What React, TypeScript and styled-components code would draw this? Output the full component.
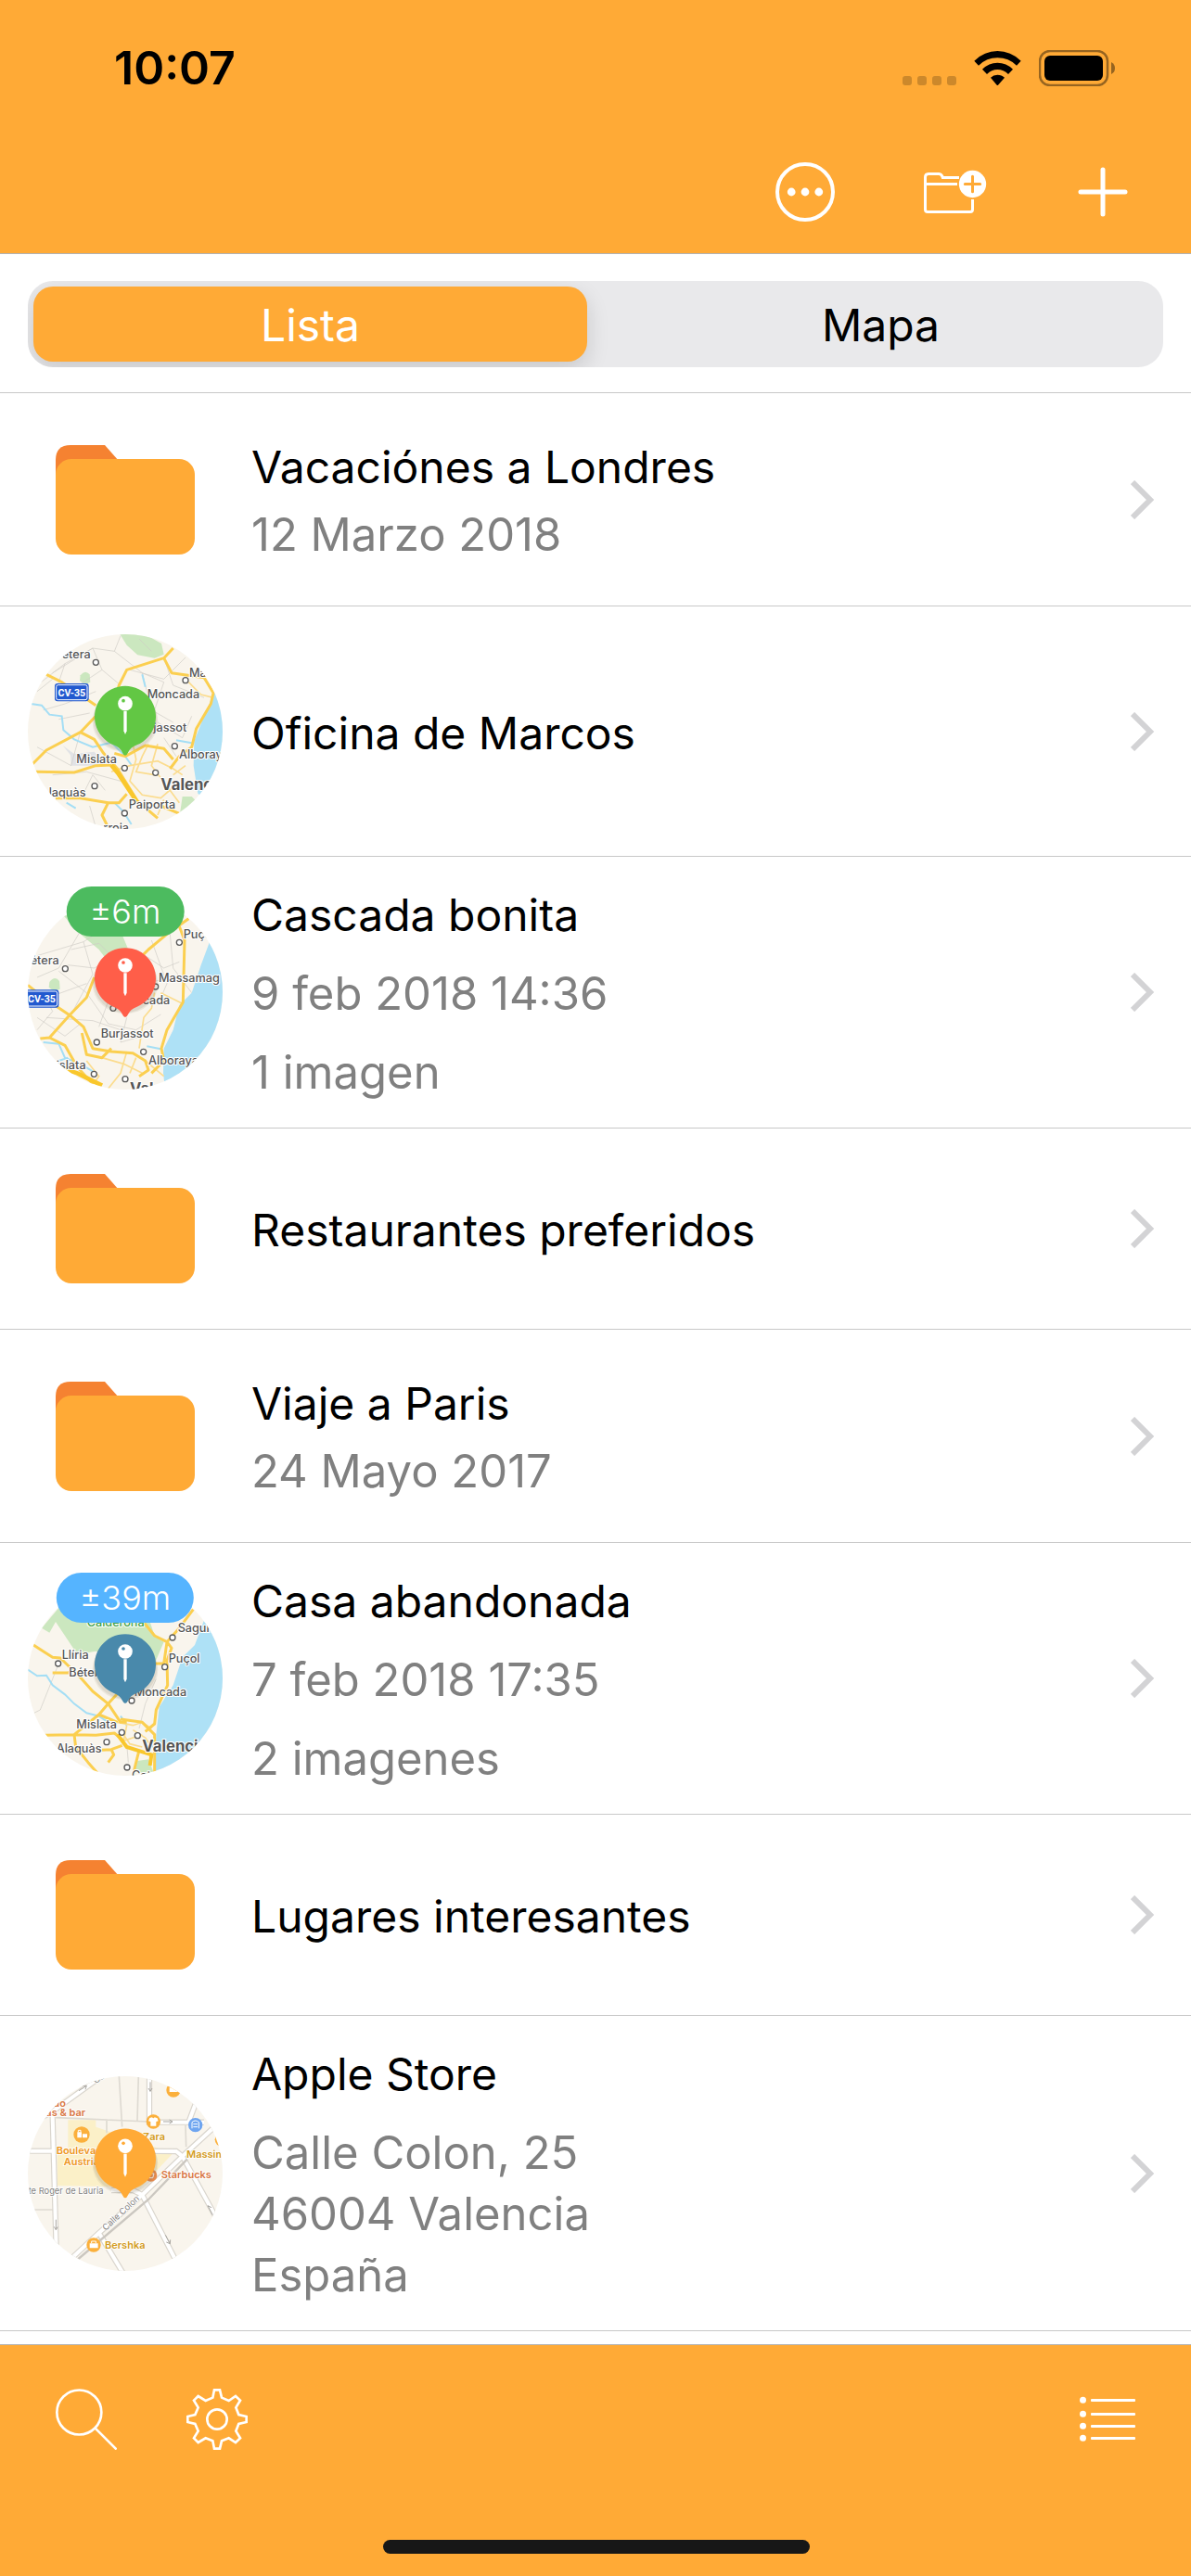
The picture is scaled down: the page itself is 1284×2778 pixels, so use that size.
import React, { useState } from "react";
import styled, { createGlobalStyle } from "styled-components";

const color = {
  accent: "#ffaa36",
  folderTab: "#f58231",
  line: "#c8c8c8",
  barLine: "#b2b2b2",
  muted: "#808080",
  track: "#e9e9eb",
  chevron: "#d3d3d5",
};

const GlobalStyle = createGlobalStyle`
  * { box-sizing: border-box; }
  body {
    margin: 0;
    background: #fff;
    color: #000;
    font-family: Inter, "Liberation Sans", sans-serif;
    font-size: 49px;
    line-height: 66px;
  }
  svg { display: block; flex: none; }
`;

const Screen = styled.div`
  display: flex;
  flex-direction: column;
  min-height: 100vh;
`;

const Header = styled.header`
  background: ${color.accent};
  border-bottom: 1px solid ${color.barLine};
`;

const StatusBar = styled.div`
  display: flex;
  justify-content: space-between;
  align-items: center;
  height: 146px;
  padding: 0 82px 0 123px;
`;

const Clock = styled.time`
  font-size: 50px;
  font-weight: 600;
`;

const StatusIcons = styled.div`
  display: flex;
  align-items: center;
  gap: 19px;
`;

const Toolbar = styled.nav`
  display: flex;
  justify-content: flex-end;
  align-items: center;
  gap: 96px;
  height: 127px;
  padding: 0 64px 5px;
`;

const IconButton = styled.button`
  display: block;
  padding: 0;
  border: 0;
  background: none;
  color: #fff;
  cursor: pointer;
`;

const SegmentStrip = styled.div`
  padding: 29px 30px 27px;
  border-bottom: 1px solid ${color.line};
`;

const SegmentTrack = styled.div`
  display: grid;
  grid-template-columns: 1fr 1fr;
  gap: 18px;
  padding: 6px;
  border-radius: 27px;
  background: ${color.track};
  overflow: hidden;
`;

const Segment = styled.button<{ $active: boolean }>`
  height: 81px;
  padding: 2px 0 0;
  border: 0;
  border-radius: 21px;
  background: ${(p) => (p.$active ? color.accent : "transparent")};
  box-shadow: ${(p) => (p.$active ? "0 9px 24px rgba(0, 0, 0, 0.14)" : "none")};
  color: ${(p) => (p.$active ? "#fff" : "#000")};
  font: inherit;
  font-size: 48px;
  cursor: pointer;
`;

const List = styled.ul`
  flex: 1;
  margin: 0;
  padding: 0;
  list-style: none;
`;

const Item = styled.li`
  border-bottom: 1px solid ${color.line};
`;

const Row = styled.a<{ $kind: "folder" | "place" }>`
  display: flex;
  align-items: center;
  gap: 31px;
  min-height: ${(p) => (p.$kind === "folder" ? "216px" : "269px")};
  padding: ${(p) => (p.$kind === "folder" ? "45px" : "28px")} 39px
    ${(p) => (p.$kind === "folder" ? "45px" : "28px")} 30px;
  color: inherit;
  text-decoration: none;
`;

const Leading = styled.div`
  position: relative;
  display: flex;
  justify-content: center;
  width: 210px;
  flex: none;
`;

const Body = styled.div<{ $kind: "folder" | "place" }>`
  display: flex;
  flex: 1;
  flex-direction: column;
  gap: ${(p) => (p.$kind === "folder" ? "7px" : "19px")};
  min-width: 0;
  margin: 2px 0 -2px;
`;

const Title = styled.div`
  font-size: 48px;
`;

const Detail = styled.div`
  color: ${color.muted};
  white-space: pre-line;
`;

const MapCircle = styled.svg`
  width: 210px;
  height: 210px;
  border-radius: 50%;
  background: #f9f5ed;
`;

const Accuracy = styled.span<{ $tone: string }>`
  position: absolute;
  top: -9px;
  left: 50%;
  transform: translateX(-50%);
  padding: 0 25px;
  border-radius: 27px;
  background: ${(p) => p.$tone};
  color: #fff;
  font-size: 36px;
  font-weight: 300;
  line-height: 54px;
  white-space: nowrap;
`;

const Footer = styled.footer`
  position: sticky;
  bottom: 0;
  padding: 47px 59px 24px 60px;
  border-top: 1px solid ${color.barLine};
  background: ${color.accent};
`;

const FooterTools = styled.div`
  display: flex;
  align-items: center;
  gap: 75px;
  margin-bottom: 97px;
`;

const Spacer = styled.div`
  flex: 1;
`;

const HomeIndicator = styled.div`
  width: 460px;
  max-width: 40%;
  height: 15px;
  margin: 0 auto;
  border-radius: 8px;
  background: #171717;
`;

/* ---------- icons ---------- */

const SignalDots = () => (
  <svg width="58" height="39" viewBox="0 0 58 39" fill="#cc882b" aria-hidden="true">
    {[0, 16, 32, 48].map((x) => (
      <rect key={x} x={x} y="28" width="10" height="10" rx="3" />
    ))}
  </svg>
);

const Wifi = () => (
  <svg width="51" height="39" viewBox="810 69 153 117" fill="#000" aria-hidden="true">
    <path d="M811 104 Q844 72 886 72 Q929 72 962 104 L948 119 Q922 94 886 94 Q851 94 825 119Z" />
    <path d="M837 131 Q858 110 886 110 Q915 110 936 131 L921 147 Q906 132 886 132 Q867 132 852 147Z" />
    <path d="M864 158 Q873 149 886 149 Q900 149 909 158 L888 182 Q886 184 884 182Z" />
  </svg>
);

const Battery = () => (
  <svg width="82" height="39" viewBox="0 0 82 39" aria-hidden="true">
    <rect x="1" y="1" width="73" height="37" rx="11" fill="none" stroke="#966420" strokeWidth="2.5" />
    <rect x="6" y="6" width="63" height="27" rx="6" fill="#000" />
    <path d="M78 13 Q82 15 82 19.500 Q82 24 78 26Z" fill="#966420" />
  </svg>
);

const MoreIcon = () => (
  <svg width="64" height="64" viewBox="0 0 64 64" fill="currentColor" aria-hidden="true">
    <circle cx="32" cy="32" r="30" fill="none" stroke="currentColor" strokeWidth="4" />
    <circle cx="17.200" cy="32" r="4.400" />
    <circle cx="32" cy="32" r="4.400" />
    <circle cx="46.800" cy="32" r="4.400" />
  </svg>
);

const NewFolderIcon = () => (
  <svg width="68" height="64" viewBox="648 435 204 192" fill="none" stroke="currentColor" strokeWidth="9" aria-hidden="true">
    <path d="M762 484.500 H709 Q706 473 697 472.500 H663 Q652.500 473 652.500 483 V588 Q652.500 595.500 660 595.500 H798 Q805.500 595.500 805.500 588 V555" />
    <path d="M652 505.500 H756" />
    <circle cx="805.500" cy="505.500" r="44" fill="currentColor" stroke="none" />
    <path d="M805.500 481 V530 M781 505.500 H830" stroke={color.accent} strokeLinecap="round" />
  </svg>
);

const PlusIcon = () => (
  <svg width="60" height="60" viewBox="0 0 60 60" fill="none" stroke="currentColor" strokeWidth="5" strokeLinecap="round" aria-hidden="true">
    <path d="M29 6 V54 M5 30 H53" />
  </svg>
);

const SearchIcon = () => (
  <svg width="66" height="66" viewBox="30 33 198 198" fill="none" stroke="currentColor" strokeWidth="8" aria-hidden="true">
    <circle cx="106" cy="109.500" r="72" />
    <path d="M158 161 L224 227" strokeLinecap="round" />
  </svg>
);

const GearIcon = () => (
  <svg width="66" height="66" viewBox="453 33 198 198" fill="none" stroke="currentColor" strokeWidth="8" aria-hidden="true">
    <path d="M538 62 L543 37 H561 L567 62 L590 72 L612 57 L627 71 L613 94 L622 117 L647 123 V141 L622 147 L613 170 L627 193 L612 207 L590 193 L567 202 L561 227 H543 L538 202 L515 193 L491 207 L477 193 L491 170 L481 147 L457 141 V123 L481 117 L491 94 L477 71 L491 57 L515 72Z" />
    <circle cx="552" cy="132" r="32" />
  </svg>
);

const ListIcon = () => (
  <svg width="61" height="50" viewBox="60 57 183 150" fill="currentColor" aria-hidden="true">
    {[70, 115, 154, 193].map((y) => (
      <g key={y}>
        <circle cx="70.500" cy={y} r="10.500" />
        <rect x="96" y={y - 4} width="144" height="9" rx="3" />
      </g>
    ))}
  </svg>
);

const FolderIcon = () => (
  <svg width="150" height="118" viewBox="0 0 150 118" aria-hidden="true">
    <path d="M0 34 V16 Q0 0 16 0 H53 L68 17 V34Z" fill={color.folderTab} />
    <rect y="15" width="150" height="103" rx="17" fill={color.accent} />
  </svg>
);

const Chevron = () => (
  <svg width="26" height="42" viewBox="0 0 26 42" fill="none" stroke={color.chevron} strokeWidth="6" aria-hidden="true">
    <path d="M2 2 L21 21 L2 40" />
  </svg>
);

/* ---------- map thumbnails ---------- */

const Roads = styled.g`
  fill: none;
  stroke: #fbcf50;
  stroke-width: 9;
  stroke-linejoin: round;
`;

const MinorRoads = styled.g`
  fill: none;
  stroke: #fbdc8e;
  stroke-width: 5;
`;

const Tracks = styled.g`
  fill: none;
  stroke: #cfccc6;
  stroke-width: 2;
`;

const Rivers = styled.g`
  fill: none;
  stroke: #a4def5;
  stroke-width: 6;
`;

const Water = styled.path`
  fill: #aee1f6;
`;

const Park = styled.path`
  fill: #cbe7bf;
`;

const Town = styled.text<{ $big?: boolean; $tone?: string }>`
  fill: ${(p) => p.$tone || "#555"};
  font-size: ${(p) => (p.$big ? 50 : 38)}px;
  font-weight: ${(p) => (p.$big ? 700 : 500)};
  stroke: #fff;
  stroke-width: 6px;
  stroke-linejoin: round;
  paint-order: stroke;
`;

const Dots = ({ at }: { at: [number, number][] }) => (
  <g fill="#fff" stroke="#5a5a5a" strokeWidth="4">
    {at.map(([x, y]) => (
      <circle key={`${x}-${y}`} cx={x} cy={y} r="9" />
    ))}
  </g>
);

const RoadSign = ({ x, y }: { x: number; y: number }) => (
  <g transform={`translate(${x} ${y})`}>
    <rect width="110" height="58" rx="9" fill="#2259cf" />
    <rect x="5" y="5" width="100" height="48" rx="6" fill="none" stroke="#fff" strokeWidth="3" />
    <text x="55" y="41" textAnchor="middle" fill="#fff" fontSize="32" fontWeight="700" fontFamily="Roboto, sans-serif">
      CV-35
    </text>
  </g>
);

const Pin = ({ y, tone }: { y: number; tone: string }) => (
  <g transform={`translate(345 ${y})`}>
    <ellipse cx="0" cy="-30" rx="106" ry="98" fill="#7a6a50" opacity="0.1" />
    <ellipse cx="0" cy="-36" rx="103" ry="100" fill="#7a6a50" opacity="0.12" />
    <path d="M0 79 Q-5 79 -9 70 Q-17 52 -38 45 A99 99 0 1 1 38 45 Q17 52 9 70 Q5 79 0 79Z" fill={tone} />
    <path d="M-5 -64 H5 V0 L0 11 L-5 0Z" fill="#fff" />
    <circle cx="0" cy="-89" r="23.500" fill="#fff" />
    <circle cx="-6" cy="-98" r="5.500" fill={tone} />
  </g>
);

const OfficeMap = () => (
  <MapCircle viewBox="30 45 630 630" role="img" aria-label="Mapa de Valencia">
    <Park d="M325 40 L350 80 L385 112 L440 122 L470 110 L462 75 L400 40Z" />
    <Park d="M200 178 Q215 158 230 175 L232 200 L215 208 L198 196Z" />
    <Park d="M520 640 L530 570 L560 570 L590 600Z" />
    <path d="M143 405 L180 432 L245 425 L285 470 L170 470 L168 436Z" fill="#e2e3e6" />
    <Water d="M632 235 L600 310 L568 390 L566 470 L580 560 L620 590 L670 560 V240Z" />
    <Tracks>
      <path d="M110 170 L240 90 L310 100 L330 50 M240 90 L150 140 L120 230 M310 100 L400 170 L430 290 L500 330 M240 90 L270 160 L330 210 M80 290 L150 270 L250 230 M130 320 L230 300 M360 160 L470 190 L540 120 M470 120 L500 210 L600 250 M400 170 L470 200 L440 290 M110 500 L220 490 L330 520 M60 410 L170 470 L200 360 M210 560 L240 500 L280 550 M450 330 L530 380 L560 310" />
      <path d="M60 230 L110 190 M150 140 L60 210 M270 160 L180 220 M430 100 L390 60 M230 600 L250 670 M470 380 L510 440" />
    </Tracks>
    <Rivers>
      <path d="M40 270 L75 275 L100 305 L140 310 L145 355 L180 385 L240 410 L300 395 L345 440 L365 468" />
      <path d="M400 175 L410 215 M510 388 L560 397 M155 590 L185 608 M310 590 L340 620 L365 660" />
    </Rivers>
    <MinorRoads>
      <path d="M300 490 L360 470 L450 455 L500 480 L530 500 M370 400 L380 450 L360 520 L400 565 L460 575 L500 540 M450 400 L430 470 L520 590 M420 400 L400 440 L380 490 L440 500 M550 200 L590 240 L630 250 M470 580 L450 630 M540 470 L500 500" />
    </MinorRoads>
    <Roads>
      <path d="M500 90 L470 122 L350 160 L325 210 L310 260 M470 122 L495 170 L600 185 L630 235 L622 270 L575 350 L560 410 L520 440 L490 480" />
      <path d="M90 175 L140 200 L250 275 M250 310 L200 362 L90 420 L45 465 M200 362 L245 385 L275 430 L320 480 L385 585 L450 640" />
      <path d="M55 490 L180 492 L250 470 L300 468 M310 430 L345 440 L410 405 L470 415 L500 450 M120 575 L200 575 L290 590 L325 590 L350 562 M290 590 L270 630 L290 670 M460 600 L520 625" />
    </Roads>
    <path d="M300 468 L322 495 L385 590" fill="none" stroke="#f9c72c" strokeWidth="14" />
    <Dots at={[[250, 136], [540, 194], [505, 407], [343, 478], [443, 493], [246, 536], [343, 624]]} />
    <Town x="140" y="122">etera</Town>
    <Town x="552" y="182">Ma</Town>
    <Town x="416" y="251">Moncada</Town>
    <Town x="436" y="360">jassot</Town>
    <Town x="519" y="447">Alboray</Town>
    <Town x="187" y="463">Mislata</Town>
    <Town x="98" y="570">laquàs</Town>
    <Town x="356" y="608">Paiporta</Town>
    <Town x="274" y="684">rroja</Town>
    <Town x="460" y="548" $big>Valencia</Town>
    <RoadSign x={117} y={204} />
    <Pin y={358} tone="#62c744" />
  </MapCircle>
);

const WaterfallMap = () => (
  <MapCircle viewBox="30 63 630 630" role="img" aria-label="Mapa de Moncada">
    <Park d="M145 130 L200 190 L260 240 L290 280 L355 240 L330 180 L300 130Z" />
    <Park d="M100 345 Q118 322 132 342 L134 368 L115 375 L98 362Z" />
    <Water d="M618 215 L590 290 L560 380 L520 420 L500 500 L470 560 L468 640 L475 700 H680 V215Z" />
    <Tracks>
      <path d="M60 260 L210 215 L310 150 M160 290 L245 300 L350 240 L400 260 M130 310 L220 380 L290 480 M210 215 L240 320 L170 450 M90 460 L240 470 L330 500 M60 500 L110 440 L80 380 M350 460 L330 540 L400 520 M380 240 L470 300 L520 280 M430 210 L480 350 L450 420 M490 190 L500 300 L560 380 M290 480 L380 500 L460 450 M200 180 L130 300 L60 330 M170 240 L260 220 L340 300" />
      <path d="M110 390 L220 350 M60 460 L150 520 L200 480 M390 350 L520 330 M300 380 L260 490" />
    </Tracks>
    <Rivers>
      <path d="M80 540 L130 545 L150 590 L200 610 L250 640 M415 553 L460 562 M130 600 L160 590" />
    </Rivers>
    <MinorRoads>
      <path d="M440 380 L430 430 L405 460 L390 560 M460 380 L530 415 M270 590 L340 610 L400 640 M350 570 L330 640 L290 690 M380 590 L360 640 M410 600 L470 650 M220 600 L260 650 L230 690" />
    </MinorRoads>
    <Roads>
      <path d="M550 140 L480 190 L420 240 L400 260 M520 165 L537 210 L532 410 L480 500 L462 560 L470 600 L430 640" />
      <path d="M30 355 L80 395 L165 452 L210 490 L240 560 L300 570 L370 575 L410 600 L420 630 L390 650 M245 330 L220 395 L165 452 L100 525 L70 528 M100 525 L150 550 L190 620 L240 675 M205 510 L220 580 L270 590 L300 560" />
    </Roads>
    <path d="M130 620 L190 640 L270 680" fill="none" stroke="#f9c72c" strokeWidth="14" />
    <Dots at={[[151, 302], [520, 217], [443, 360], [306, 430], [253, 540], [404, 571], [244, 643], [345, 659]]} />
    <Town x="38" y="288">étera</Town>
    <Town x="533" y="203">Puçol</Town>
    <Town x="453" y="345">Massamag</Town>
    <Town x="401" y="416">cada</Town>
    <Town x="266" y="524">Burjassot</Town>
    <Town x="420" y="612">Alboraya</Town>
    <Town x="122" y="627">islata</Town>
    <Town x="360" y="709" $big>Valencia</Town>
    <RoadSign x={20} y={370} />
    <Pin y={380} tone="#ff5e49" />
  </MapCircle>
);

const HouseMap = () => (
  <MapCircle viewBox="30 63 630 630" role="img" aria-label="Mapa de la costa de Valencia">
    <Park d="M75 215 L130 150 H410 L440 240 L470 260 L440 330 L350 330 L250 290 L190 300 L150 240 L120 195 L100 230Z" />
    <Park d="M370 680 L385 645 L420 640 L440 690Z" />
    <Water d="M600 190 L570 270 L530 310 L500 400 L455 470 L445 560 L440 690 H680 V190Z" />
    <Tracks>
      <path d="M130 330 L70 480 L50 490 M445 380 L410 460 L390 540 M350 590 L355 650" />
    </Tracks>
    <Rivers>
      <path d="M30 350 L60 370 L90 368 L110 400 L150 430 L180 460 L220 490 L260 500 L290 520" />
      <path d="M330 500 L350 530 M430 590 L450 625" />
    </Rivers>
    <MinorRoads>
      <path d="M320 520 L370 530 L400 520 L430 540 M340 560 L360 590 L400 600 M370 545 L410 570 L430 600 M350 530 L340 580 L400 560" />
    </MinorRoads>
    <Roads>
      <path d="M45 268 L110 310 L135 312 L200 375 L240 420 L290 460 L330 520 L350 520 M110 360 L160 360 L185 345" />
      <path d="M565 155 L520 215 L480 260 L470 330 L440 330 M400 190 L440 240 L480 260 L495 280 L480 320 L482 400 L445 480 L440 525 L410 550 M345 400 L290 460 L260 495 L180 560 L85 562 M260 495 L320 520 M180 560 L250 562 L310 555 L340 580 M180 560 L185 600 L225 650 L260 690 M270 610 L300 608 L308 625 L290 650 M300 608 L335 595 M330 510 L400 520 L440 560 L440 690 M390 610 L370 690" />
    </Roads>
    <path d="M320 560 L350 600 L430 625 L425 660" fill="none" stroke="#f9c72c" strokeWidth="12" />
    <Dots at={[[128, 330], [498, 246], [473, 341], [366, 450], [334, 553], [385, 563], [285, 584], [351, 666]]} />
    <Town x="221" y="210" $tone="#3f9f45">Calderona</Town>
    <Town x="140" y="316">Llíria</Town>
    <Town x="515" y="229">Sagunt</Town>
    <Town x="485" y="328">Puçol</Town>
    <Town x="163" y="372">Bétera</Town>
    <Town x="374" y="435">Moncada</Town>
    <Town x="187" y="540">Mislata</Town>
    <Town x="122" y="618">Alaquàs</Town>
    <Town x="366" y="704">Catarroja</Town>
    <Town x="400" y="616" $big>Valencia</Town>
    <Pin y={380} tone="#4989ab" />
  </MapCircle>
);

const StreetLabel = styled.text`
  fill: #82807c;
  font-size: 28px;
  stroke: #fff;
  stroke-width: 5px;
  paint-order: stroke;
`;

const Poi = styled.text<{ $tone: string }>`
  fill: ${(p) => p.$tone};
  font-size: 33px;
  font-weight: 600;
  stroke: #fff;
  stroke-width: 5px;
  paint-order: stroke;
`;

const streets = [
  "M20 205 L110 155 L270 40",
  "M110 170 L122 600",
  "M20 283 H115",
  "M423 40 V190 L600 190",
  "M550 190 L580 110",
  "M400 283 L510 284 L530 300 L640 500",
  "M150 650 L260 548 L400 425 L530 300 L650 190",
  "M300 410 H370 L400 425 L510 640",
  "M260 548 L345 690",
];

const StoreMap = () => (
  <MapCircle viewBox="30 41 630 630" role="img" aria-label="Mapa de Calle Colon">
    <path d="M160 183 H250 V205 L500 290 L395 400 L125 395 V290 H160Z" fill="#fbf0c8" />
    <g fill="none" stroke="#dedad2" strokeWidth="5">
      <path d="M120 175 L420 188 M325 40 L335 205 M388 40 L384 185 M285 180 V225 M540 200 L542 270 M50 473 H118" />
    </g>
    <g fill="none" stroke="#d9d5cd" strokeWidth="19">
      {streets.map((d) => <path key={d} d={d} />)}
    </g>
    <g fill="none" stroke="#fff" strokeWidth="12">
      {streets.map((d) => <path key={d} d={d} />)}
    </g>
    <path d="M190 635 L420 440 L545 310" fill="none" stroke="#cbc7c0" strokeWidth="7" />
    <g fill="none" stroke="#a9a6a1" strokeWidth="3">
      <path d="M195 88 L220 72 L206 72 M220 72 L216 84 M426 60 V90 L420 80 M426 90 L432 80 M468 188 H498 L488 182 M498 188 L488 194 M121 505 V538 L115 528 M121 538 L127 528 M475 555 L490 583 L478 578 M490 583 L491 570 M628 490 L612 460 L624 466" />
    </g>
    <g fill="#fbb03c">
      <circle cx="204" cy="230" r="26" />
      <circle cx="436" cy="188" r="23" />
      <circle cx="501" cy="86" r="23" />
      <circle cx="243" cy="587" r="23" />
      <circle cx="658" cy="246" r="23" />
    </g>
    <circle cx="428" cy="362" r="20" fill="#ea8c50" />
    <circle cx="572" cy="199" r="23" fill="#6ea5f0" />
    <g fill="#fff">
      <path d="M190 222 H204 V240 H190Z M207 228 H222 V240 H207Z M424 176 L432 174 Q436 180 440 174 L449 177 L452 186 L445 188 V202 H427 V188 L420 186Z M230 582 H257 V597 H230Z M488 78 H514 V92 H488Z" />
    </g>
    <g fill="none" stroke="#fff" strokeWidth="3">
      <path d="M193 222 V216 H201 V222 M236 581 V575 H250 V581 M561 210 V190 Q572 180 583 190 V210 M565 196 H579 M565 205 H579 M418 356 H438 L434 370 H422Z" />
    </g>
    <Poi x="112" y="139" $tone="#d97744">do</Poi>
    <Poi x="88" y="171" $tone="#d97744">as &amp; bar</Poi>
    <Poi x="122" y="294" $tone="#ee9722">Boulevard</Poi>
    <Poi x="146" y="330" $tone="#ee9722">Austria</Poi>
    <Poi x="402" y="249" $tone="#d39b22">Zara</Poi>
    <Poi x="543" y="306" $tone="#d39b22">Massimo</Poi>
    <Poi x="461" y="371" $tone="#d97744">Starbucks</Poi>
    <Poi x="279" y="599" $tone="#d39b22">Bershka</Poi>
    <StreetLabel x="32" y="421">te Roger de Lauria</StreetLabel>
    <StreetLabel transform="translate(282 542) rotate(-43)">Calle Colon</StreetLabel>
    <StreetLabel transform="translate(250 66) rotate(-35)">Co</StreetLabel>
    <Pin y={356} tone={color.accent} />
  </MapCircle>
);

/* ---------- data ---------- */

type Entry = {
  kind: "folder" | "place";
  title: string;
  details?: string[];
  map?: React.ReactNode;
  accuracy?: { text: string; tone: string };
};

const entries: Entry[] = [
  { kind: "folder", title: "Vacaciónes a Londres", details: ["12 Marzo 2018"] },
  { kind: "place", title: "Oficina de Marcos", map: <OfficeMap /> },
  {
    kind: "place",
    title: "Cascada bonita",
    details: ["9 feb 2018 14:36", "1 imagen"],
    map: <WaterfallMap />,
    accuracy: { text: "±6m", tone: "#4cbb5f" },
  },
  { kind: "folder", title: "Restaurantes preferidos" },
  { kind: "folder", title: "Viaje a Paris", details: ["24 Mayo 2017"] },
  {
    kind: "place",
    title: "Casa abandonada",
    details: ["7 feb 2018 17:35", "2 imagenes"],
    map: <HouseMap />,
    accuracy: { text: "±39m", tone: "#55b4ff" },
  },
  { kind: "folder", title: "Lugares interesantes" },
  {
    kind: "place",
    title: "Apple Store",
    details: ["Calle Colon, 25\n46004 Valencia\nEspaña"],
    map: <StoreMap />,
  },
];

const EntryRow = ({ entry }: { entry: Entry }) => (
  <Item>
    <Row href="#" $kind={entry.kind}>
      <Leading>
        {entry.map || <FolderIcon />}
        {entry.accuracy && <Accuracy $tone={entry.accuracy.tone}>{entry.accuracy.text}</Accuracy>}
      </Leading>
      <Body $kind={entry.kind}>
        <Title>{entry.title}</Title>
        {entry.details?.map((line) => (
          <Detail key={line}>{line}</Detail>
        ))}
      </Body>
      <Chevron />
    </Row>
  </Item>
);

const tabs = ["Lista", "Mapa"];

export default function App() {
  const [active, setActive] = useState("Lista");
  return (
    <Screen>
      <GlobalStyle />
      <Header>
        <StatusBar>
          <Clock>10:07</Clock>
          <StatusIcons>
            <SignalDots />
            <Wifi />
            <Battery />
          </StatusIcons>
        </StatusBar>
        <Toolbar>
          <IconButton aria-label="Más opciones"><MoreIcon /></IconButton>
          <IconButton aria-label="Nueva carpeta"><NewFolderIcon /></IconButton>
          <IconButton aria-label="Añadir"><PlusIcon /></IconButton>
        </Toolbar>
      </Header>
      <SegmentStrip>
        <SegmentTrack>
          {tabs.map((tab) => (
            <Segment key={tab} $active={tab === active} aria-pressed={tab === active} onClick={() => setActive(tab)}>
              {tab}
            </Segment>
          ))}
        </SegmentTrack>
      </SegmentStrip>
      <List>
        {entries.map((entry) => (
          <EntryRow key={entry.title} entry={entry} />
        ))}
      </List>
      <Footer>
        <FooterTools>
          <IconButton aria-label="Buscar"><SearchIcon /></IconButton>
          <IconButton aria-label="Ajustes"><GearIcon /></IconButton>
          <Spacer />
          <IconButton aria-label="Ordenar lista"><ListIcon /></IconButton>
        </FooterTools>
        <HomeIndicator />
      </Footer>
    </Screen>
  );
}
